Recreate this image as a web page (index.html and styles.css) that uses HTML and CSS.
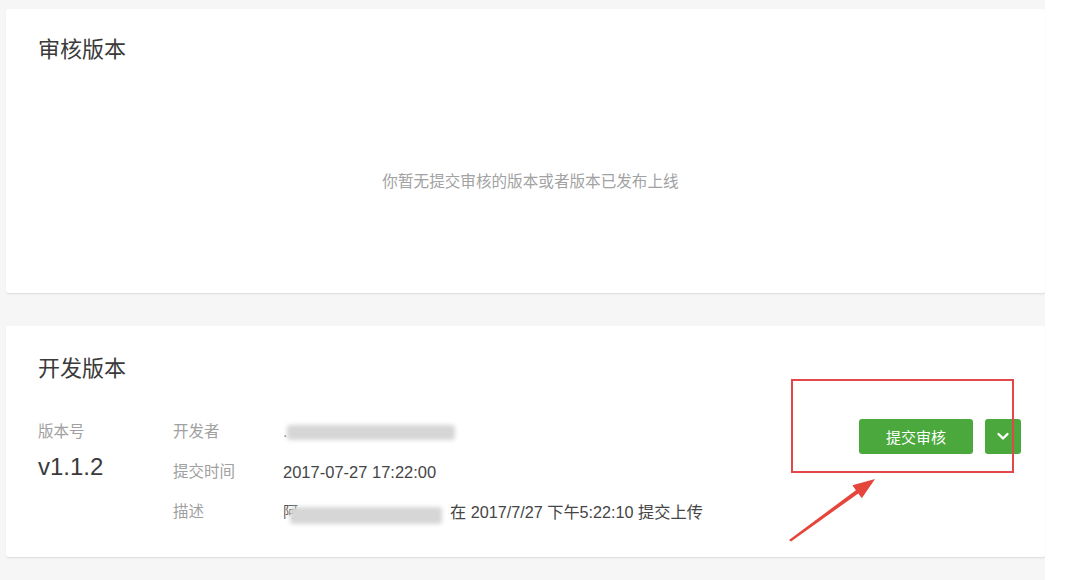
FILE: index.html
```html
<!DOCTYPE html>
<html lang="zh-CN">
<head>
<meta charset="utf-8">
<title>版本管理</title>
<link rel="stylesheet" href="styles.css">
</head>
<body>
<div class="page">
  <section class="card card-review">
    <h2 class="card-title">审核版本</h2>
    <div class="empty">你暂无提交审核的版本或者版本已发布上线</div>
  </section>

  <section class="card card-dev">
    <h2 class="card-title">开发版本</h2>
    <div class="dev-row">
      <div class="version">
        <div class="label">版本号</div>
        <div class="version-num">v1.1.2</div>
      </div>
      <div class="info">
        <div class="label">开发者</div>
        <div class="value"><span class="dot">.</span><span class="blur blur-dev"></span></div>
        <div class="label">提交时间</div>
        <div class="value date">2017-07-27 17:22:00</div>
        <div class="label">描述</div>
        <div class="value"><span class="peek">阿</span><span class="blur blur-desc"></span><span class="desc-text">在 2017/7/27 下午5:22:10 提交上传</span></div>
      </div>
      <div class="actions">
        <button class="btn btn-primary">提交审核</button>
        <button class="btn btn-more" aria-label="更多">
          <svg width="14" height="9" viewBox="0 0 14 9"><path d="M2.5 2 L7 6.5 L11.5 2" fill="none" stroke="#fff" stroke-width="2.4" stroke-linecap="round" stroke-linejoin="round"/></svg>
        </button>
      </div>
    </div>
  </section>

  <svg class="annotation" width="1080" height="580" viewBox="0 0 1080 580">
    <rect x="792" y="380" width="221" height="92" fill="none" stroke="#e2474a" stroke-width="2"/>
    <polygon points="789,540 855.9,490.2 852.4,485.3 875,479 861.8,498.3 858.3,493.4 791,541.5" fill="#e5463c"/>
  </svg>
</div>
</body>
</html>
```

FILE: styles.css
```css
html, body {
  margin: 0;
  padding: 0;
  background: #ffffff;
  font-family: "Liberation Sans", "Noto Sans CJK SC", sans-serif;
}

.page {
  position: relative;
  width: 1045px;
  height: 580px;
  box-sizing: border-box;
  padding: 9px 0 0 6px;
  background: #f6f6f6;
  display: flex;
  flex-direction: column;
  gap: 33px;
}

.card {
  background: #ffffff;
  box-shadow: 0 1px 1px rgba(0, 0, 0, 0.07), 0 2px 2px rgba(0, 0, 0, 0.03);
  border-radius: 2px;
  box-sizing: border-box;
  padding-left: 32px;
}

.card-title {
  margin: 0;
  font-size: 22px;
  font-weight: normal;
  line-height: 30px;
  color: #3a3a3a;
}

.card-review {
  height: 284px;
  padding-top: 26px;
  display: flex;
  flex-direction: column;
}

.empty {
  flex: 1;
  display: flex;
  align-items: center;
  justify-content: center;
  padding-right: 22px;
  padding-top: 2px;
  font-size: 15.6px;
  color: #a2a2a2;
}

.card-dev {
  height: 231px;
  padding-top: 28px;
  padding-right: 24px;
}

.dev-row {
  display: flex;
  align-items: flex-start;
  margin-top: 28px;
}

.label {
  font-size: 15.5px;
  color: #a0a0a0;
  line-height: 40px;
}

.version {
  width: 135px;
}

.version .label {
  line-height: 16px;
  margin-top: 12px;
}

.version-num {
  font-size: 24px;
  color: #3a3a3a;
  margin-top: 12px;
  line-height: 30px;
}

.info {
  flex: 1;
  display: grid;
  grid-template-columns: 110px 1fr;
  align-items: center;
}

.value {
  font-size: 16px;
  color: #454545;
  line-height: 40px;
  display: flex;
  align-items: center;
}

.value.date {
  font-size: 16.5px;
}

.dot {
  color: #888;
  width: 4px;
}

.blur {
  display: inline-block;
  background: #d6d6d6;
  filter: blur(2px);
  border-radius: 3px;
}

.blur-dev {
  width: 168px;
  height: 15px;
}

.peek {
  color: #555;
  font-size: 15px;
}

.blur-desc {
  width: 152px;
  height: 17px;
  margin-top: 6px;
  margin-left: -8px;
}

.desc-text {
  margin-left: 8px;
  font-size: 16.2px;
}

.actions {
  display: flex;
  gap: 12px;
  margin-top: 7px;
}

.btn {
  height: 35px;
  border: none;
  border-radius: 3px;
  background: #4aa83c;
  color: #ffffff;
  font-family: "Noto Sans CJK SC", sans-serif;
  font-size: 15px;
  padding: 0;
  display: flex;
  align-items: center;
  justify-content: center;
}

.btn-primary {
  width: 114px;
}

.btn-more {
  width: 36px;
}

.annotation {
  position: absolute;
  left: 0;
  top: 0;
  pointer-events: none;
}
```
